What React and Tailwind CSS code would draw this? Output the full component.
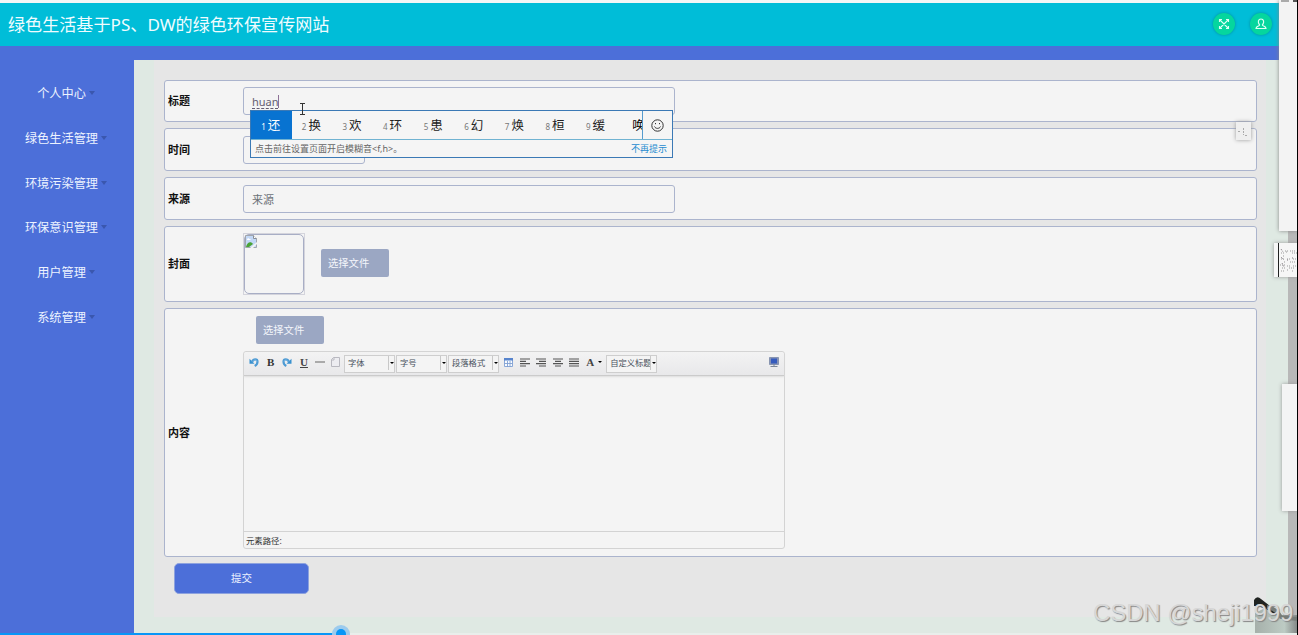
import React, { useState } from 'react';

const menuItems = ['个人中心', '绿色生活管理', '环境污染管理', '环保意识管理', '用户管理', '系统管理'];
const candidates = ['还', '换', '欢', '环', '患', '幻', '焕', '桓', '缓'];

const Header = () => (
    <header className="h-[43px] shrink-0 bg-[#00bdd8] flex items-center justify-between pl-2 pr-[7px]">
        <h1 className="text-[17.1px] leading-none text-[#effcff] whitespace-nowrap">绿色生活基于PS、DW的绿色环保宣传网站</h1>
        <div className="flex gap-[15px] pb-[2px]">
            <button className="w-[22px] h-[22px] rounded-full bg-[#05d69e] shadow-[0_0_3px_#008e9c] flex items-center justify-center">
                <svg width="12" height="12" viewBox="0 0 12 12" fill="none" stroke="#e0fff5" strokeWidth="1.1">
                    <path d="M1.500 4V1.500H4M8 1.500h2.500V4M10.500 8v2.500H8M4 10.500H1.500V8M1.500 1.500l9 9M10.500 1.500l-9 9" />
                </svg>
            </button>
            <button className="w-[22px] h-[22px] rounded-full bg-[#05d69e] shadow-[0_0_3px_#008e9c] flex items-center justify-center">
                <svg width="12" height="12" viewBox="0 0 12 12" fill="none" stroke="#e0fff5" strokeWidth="1.2">
                    <path d="M4.600 7C2.300 4.200 3.300 1 6 1s3.700 3.200 1.400 6c0 1.200 3.600 1 3.600 3.500H1c0-2.500 3.600-2.300 3.600-3.500z" />
                </svg>
            </button>
        </div>
    </header>
);

const Sidebar = () => (
    <aside className="w-[134px] shrink-0 bg-[#4c6fd9] pt-3 pr-[2px]">
        {menuItems.map((item) => (
            <div key={item} className="h-[44.7px] flex items-center justify-center gap-[3px] text-[12.2px] text-[#edf3ff] whitespace-nowrap">
                <span>{item}</span>
                <span className="w-0 h-0 -mt-[2px] border-x-[3.5px] border-x-transparent border-t-4 border-t-[#3a57ae]"></span>
            </div>
        ))}
    </aside>
);

const Row = ({ label, className, children }) => (
    <div className={`flex items-center rounded-[3px] border border-[#abb4cd] bg-[#f4f4f4] pl-[3px] ${className}`}>
        <label className="w-[75px] shrink-0 pt-px text-[11px] font-bold text-[#111]">{label}</label>
        {children}
    </div>
);

const FileButton = ({ className }) => (
    <button className={`w-[68px] h-[28px] shrink-0 rounded-[2px] bg-[#9ba7c3] text-left pl-[7px] pt-[2px] text-[10.3px] text-[#f4f6fb] ${className}`}>
        选择文件
    </button>
);

const Select = ({ children, className }) => (
    <div className={`h-[18px] shrink-0 border border-[#cecece] bg-[#f4f4f4] flex text-[8.3px] text-[#49525d] ${className}`}>
        <span className="flex-1 min-w-0 overflow-hidden whitespace-nowrap pl-[3px] leading-[14px]">{children}</span>
        <span className="w-[6px] h-[14px] shrink-0 border-l border-[#c8c8c8] flex items-center justify-center">
            <span className="w-0 h-0 border-x-2 border-x-transparent border-t-2 border-t-black"></span>
        </span>
    </div>
);

const AlignIcon = ({ d }) => (
    <svg className="shrink-0" width="10" height="9" viewBox="0 0 10 9" stroke="#555" strokeWidth="1.2">
        <path d={d} />
    </svg>
);

const Undo = ({ className }) => (
    <svg className={`shrink-0 ${className}`} width="10" height="9" viewBox="0 0 10 9" fill="none">
        <path d="M.5.7v5h5z" fill="#3991cf" />
        <path d="M3 4C4.500.5 8.500.8 8.500 3.700c0 2-1 3.300-2.800 4.300" stroke="#4e9bd4" strokeWidth="2.2" />
        <path d="M4 3.500C5 1.500 7.500 1.500 8 3.500" stroke="#8dc3ea" strokeWidth=".7" />
    </svg>
);

const Toolbar = () => (
    <div className="h-[24px] shrink-0 flex items-center pb-[3px] pl-[5px] rounded-t-[3px] border-b border-[#cbcbcb] bg-linear-to-b from-[#f3f3f3] to-[#e8e8ea] shadow-[0_1px_2px_#ddd]">
        <Undo />
        <b className="ml-2 w-[9px] font-['Liberation_Serif'] text-[11px] text-[#333]">B</b>
        <Undo className="ml-[6px] -scale-x-100" />
        <span className="ml-2 w-[9px] font-['Liberation_Serif'] text-[11px] font-bold underline text-[#444]">U</span>
        <span className="ml-[6px] w-[10px] h-[1.5px] bg-[#aaa]"></span>
        <svg className="ml-[6px] shrink-0" width="9" height="10" viewBox="0 0 9 10" fill="#ededf1" stroke="#b9b9c0">
            <path d="M.5 2.500l2-2h6v9h-8zM.5 3h2.500V.5" />
        </svg>
        <Select className="ml-1 w-[51px] mt-[3px]">字体</Select>
        <Select className="ml-[1px] w-[51px] mt-[3px]">字号</Select>
        <Select className="ml-[1px] w-[51px] mt-[3px]">段落格式</Select>
        <svg className="ml-[5px] shrink-0" width="9" height="9" viewBox="0 0 9 9">
            <path d="M.5.5h8v8h-8zM.5 5.500h8M3.500 3v6M6 3v6" fill="#f8fbff" stroke="#7f9fd2" strokeWidth=".9" />
            <path d="M0 0h9v2.500H0z" fill="#5784cd" />
        </svg>
        <div className="ml-[7px] flex gap-[6.4px]">
            <AlignIcon d="M0 1h10M0 3.300h6M0 5.600h10M0 8h6" />
            <AlignIcon d="M0 1h10M3 3.300h7M0 5.600h10M3 8h7" />
            <AlignIcon d="M0 1h10M2 3.300h6M0 5.600h10M2 8h6" />
            <AlignIcon d="M0 1h10M0 3.300h10M0 5.600h10M0 8h10" />
        </div>
        <span className="ml-[7px] font-['Liberation_Serif'] font-bold text-[11px] text-[#444]">A</span>
        <span className="ml-[4px] mr-[4px] w-0 h-0 border-x-2 border-x-transparent border-t-2 border-t-black"></span>
        <Select className="w-[51px] mt-[3px]">自定义标题</Select>
        <svg className="ml-auto mr-[5px] shrink-0" width="10" height="10" viewBox="0 0 10 10">
            <path d="M.5.5h9v7h-9z" fill="#8793b5" stroke="#8794b0" />
            <path d="M2 1.500h6v5H2z" fill="#355bbd" />
            <path d="M4 8h2M1.500 9.500h7" stroke="#7c8798" />
        </svg>
    </div>
);

const Editor = () => (
    <div className="w-[542px] h-[198px] flex flex-col rounded-[3px] border border-[#d3d3d3]">
        <Toolbar />
        <div className="flex-1"></div>
        <div className="h-[17px] border-t border-[#d3d3d3] pl-[2px] text-[8.4px] leading-[18px] text-[#333]">元素路径:</div>
    </div>
);

const CandidateBox = () => (
    <div className="absolute left-[250px] top-[110px] w-[423px] h-[48px] border border-[#3b79b5] bg-[#f5f5f5] flex flex-col">
        <div className="h-[29px] flex border-b border-[#70b3d2]">
            <div className="flex flex-1 min-w-0 overflow-hidden">
                {candidates.map((word, i) => (
                    <div
                        key={word}
                        className={`w-[40.6px] shrink-0 flex items-center justify-center gap-[2px] pt-[2px] pr-px ${i === 0 ? 'bg-[#0873d1] text-white' : 'text-[#222]'}`}
                    >
                        <span className={i === 0 ? 'text-[8px] mt-[2px]' : 'text-[8px] mt-[2px] text-[#777]'}>{i + 1}</span>
                        <span className="text-[12.5px]">{word}</span>
                    </div>
                ))}
                <span className="ml-[16px] text-[12.5px] leading-[30px] shrink-0">唤</span>
            </div>
            <div className="w-[30px] shrink-0 border-l border-[#559bce] flex items-center justify-center">
                <svg width="13" height="13" viewBox="0 0 13 13" fill="none" stroke="#333">
                    <circle cx="6.5" cy="6.5" r="5.700" />
                    <path d="M3.500 7.500c1 2.500 5 2.500 6 0M4.500 4v1.200M8.500 4v1.200" />
                </svg>
            </div>
        </div>
        <div className="flex-1 flex items-center justify-between pl-[4px] pr-[5px] text-[9px] whitespace-nowrap">
            <span className="text-[#666]">点击前往设置页面开启模糊音&lt;f,h&gt;。</span>
            <span className="text-[#258bd0]">不再提示</span>
        </div>
    </div>
);

const App = () => {
    const [title, setTitle] = useState('huan');

    return (
        <div className="relative w-[1298px] h-[635px] overflow-hidden bg-[#dfe9e3] font-['Noto_Sans','Noto_Sans_CJK_SC',sans-serif]">
            <div className="w-[1279px] h-full flex flex-col">
                <div className="h-[3px] shrink-0 bg-[#f3f6f6]"></div>
                <Header />
                <div className="h-[14px] shrink-0 bg-[#4c6fd9]"></div>
                <div className="flex-1 flex min-h-0">
                    <Sidebar />
                    <main className="ml-5 w-[1112px] h-[557px] pt-5 px-[10px] pr-[9px] bg-[#e6e6e6]">
                        <div className="flex flex-col gap-[6px]">
                            <Row label="标题" className="h-[42px]">
                                <input
                                    value={title}
                                    onChange={(e) => setTitle(e.target.value)}
                                    className="w-[432px] h-[28px] rounded-[3px] border border-[#abb4cd] px-2 text-[11px] text-[#655d72] underline decoration-dashed decoration-1 underline-offset-2 outline-none"
                                />
                            </Row>
                            <Row label="时间" className="h-[43px]">
                                <input className="w-[122px] h-[28px] rounded-[3px] border border-[#abb4cd] outline-none" />
                            </Row>
                            <Row label="来源" className="h-[43px]">
                                <input placeholder="来源" className="w-[432px] h-[28px] rounded-[3px] border border-[#abb4cd] px-2 pt-[2px] text-[11px] placeholder:text-[#6c7278] outline-none" />
                            </Row>
                            <Row label="封面" className="h-[76px]">
                                <div className="w-[62px] h-[62px] border border-[#d4d4dc]">
                                    <div className="w-[60px] h-[60px] rounded-[5px] border border-[#a8aec5]">
                                        <svg width="12" height="13" viewBox="0 0 12 13">
                                            <path d="M.5.5h8l3 3v9H.5z" fill="#c3d8f6" stroke="#a1a6ad" />
                                            <path d="M2 5c0-2 2-2 2.500-1C6 4 6 5 5.500 5z" fill="#fff" />
                                            <path d="M1 12c1-5 5-6 7-3l-4 3z" fill="#4aa336" />
                                            <path d="M8.500.5v3h3" fill="#fff" stroke="#888f99" />
                                            <path d="M5 13l7-6v2l-4 4z" fill="#f4f4f4" />
                                        </svg>
                                    </div>
                                </div>
                                <FileButton className="ml-[16px] -mt-[2px]" />
                            </Row>
                            <Row label="内容" className="h-[249px]">
                                <div className="flex flex-col gap-[7px]">
                                    <FileButton className="ml-[13px]" />
                                    <Editor />
                                </div>
                            </Row>
                        </div>
                        <button className="mt-[6px] ml-[10px] w-[135px] h-[31px] block rounded-[5px] border border-[#8da2de] bg-[#4c6fd9] text-[10.5px] text-[#edf2ff]">提交</button>
                    </main>
                </div>
            </div>

            <CandidateBox />
            <span className="absolute left-[278px] top-[95px] w-px h-[13px] bg-[#8d7196]"></span>
            <svg className="absolute left-[299px] top-[103px]" width="7" height="12" viewBox="0 0 7 12" fill="none" stroke="#333">
                <path d="M1 .5h5M1 11.500h5M3.500 1v10" />
            </svg>

            {/* widgets floating over the right edge */}
            <div className="absolute left-[1236px] top-[122px] w-[15px] h-[18px] bg-[#efefef] shadow-[0_0_4px_#999]">
                <svg width="15" height="18" viewBox="0 0 15 18" stroke="#aaa" strokeDasharray="2 1">
                    <path d="M2 9.500h2M7.500 6v7M9 13.500h2" />
                </svg>
            </div>
            <div className="absolute left-[1288px] top-0 w-[9px] h-full bg-[#b8b8b8]"></div>
            <div className="absolute left-[1279px] top-0 w-[18px] h-[231px] bg-[#f3f3f3] shadow-[0_0_4px_#888]"></div>
            <div className="absolute left-[1281px] top-0 w-[8px] h-[2px] bg-[#aaa]"></div>
            <div className="absolute left-[1293px] top-0 w-[4px] h-[2px] bg-[#555]"></div>
            <div className="absolute left-[1274px] top-[243px] w-[23px] h-[34px] bg-[#f6f6f6] shadow-[0_0_4px_#999]">
                <svg width="23" height="34" viewBox="0 0 23 34" fill="none">
                    <path d="M4.500 0v34" stroke="#222" />
                    <path d="M11 8h3m2 0h5M7 10h3m2-1h2m4 1h5M9 13h2M7 16h3m3 0h4m2 0h4M10 19h2m4 0h6M6 22h5m2 1h3m3 0h4M8 25h4m3 0h6M7 28h4m2-1h2m3 1h2" stroke="#999" strokeDasharray="1 1" />
                    <path d="M7 6l2 3M7 14l3 3M8 20l2 4M13 17h1M18 15h1" stroke="#807980" strokeDasharray="1 1" />
                </svg>
            </div>
            <div className="absolute left-[1282px] top-[384px] w-[15px] h-[127px] bg-[#f4f4f4] shadow-[0_0_4px_#999]"></div>
            <svg className="absolute left-[1250px] top-[593px]" width="47" height="42" viewBox="0 0 47 42">
                <defs>
                    <linearGradient id="base" x1="0" y1="0" x2="1" y2="0">
                        <stop stopColor="#a6b0aa" />
                        <stop offset=".7" stopColor="#bdcbc4" />
                        <stop offset="1" stopColor="#858988" />
                    </linearGradient>
                </defs>
                <path d="M5 20l10-5 13 7h19v20H5z" fill="url(#base)" />
                <path d="M4 7q3-5 7-1l9 7q6 3 12 11l-8-3-6-4q-8-4-14-4z" fill="#202321" />
                <path d="M17 14q8 1 14 10l16 2" fill="none" stroke="#777d79" strokeWidth="4" />
            </svg>
            <div className="absolute left-[1297px] top-0 w-px h-full bg-black"></div>
            <div className="absolute left-[1093px] top-[599px] font-['Liberation_Sans'] text-[24px] leading-[28px] tracking-[-0.1px] whitespace-nowrap text-[#d7d7d7] [text-shadow:1px_1px_1px_#858585]">CSDN @sheji1999</div>

            <div className="absolute left-0 top-[633px] w-[1297px] h-[2px] bg-[#e9eeeb]">
                <div className="w-[341px] h-full bg-[#0896f7]"></div>
            </div>
            <div className="absolute left-[332px] top-[625px] w-[18px] h-[18px] rounded-full bg-[#9ccbed] flex items-center justify-center">
                <span className="w-[10px] h-[10px] rounded-full bg-[#0896f7]"></span>
            </div>
        </div>
    );
};

export default App;
